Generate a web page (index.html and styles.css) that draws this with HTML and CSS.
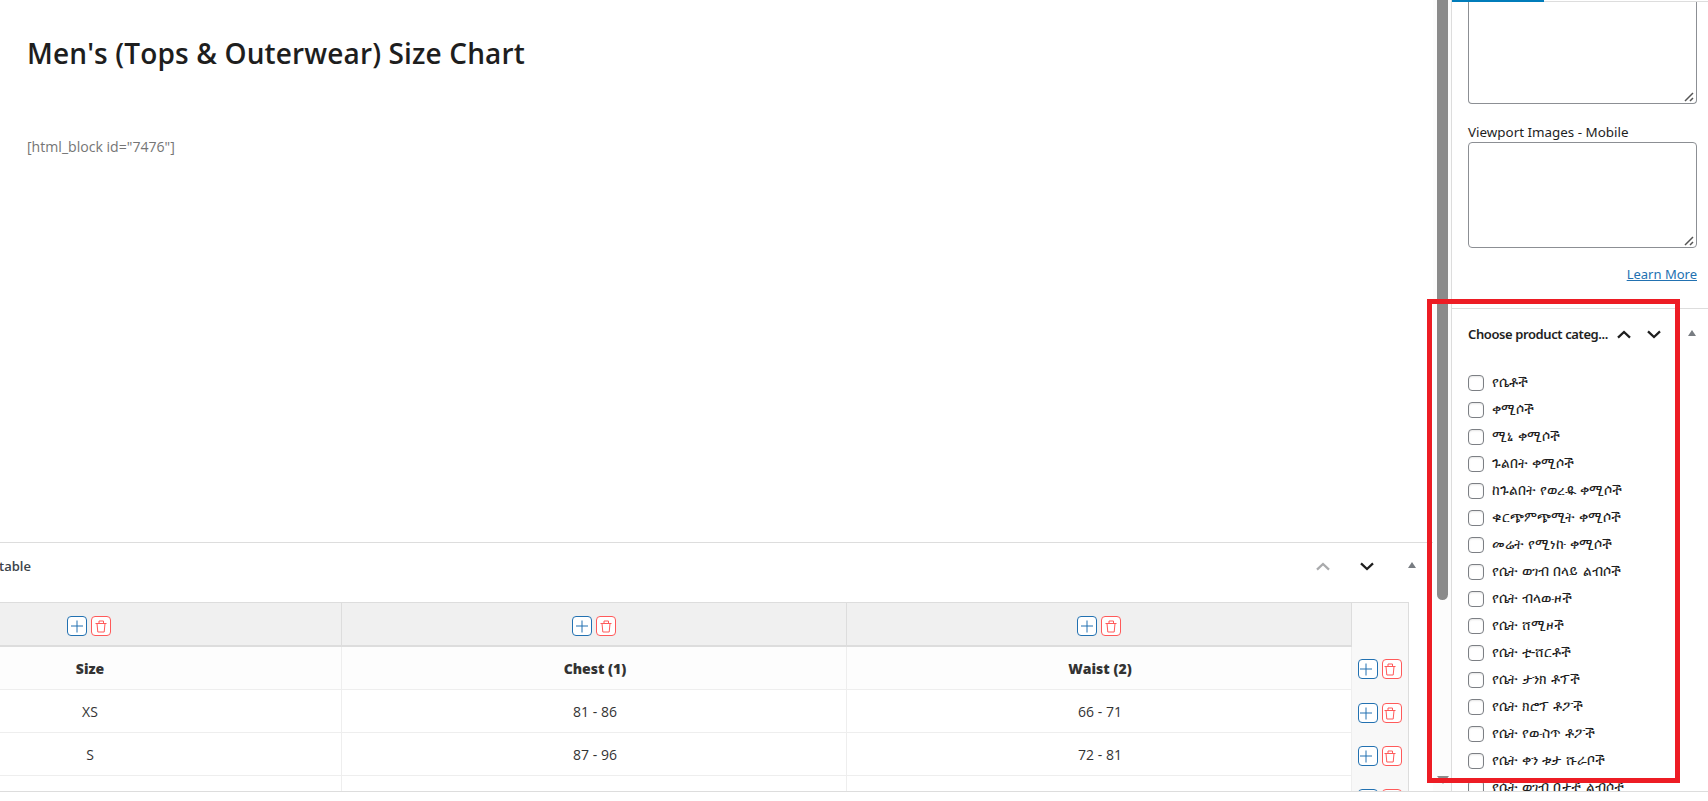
FILE: index.html
```
<!DOCTYPE html>
<html lang="en">

<head>
  <meta charset="utf-8">
  <title>Edit Size Chart</title>
  <link rel="stylesheet" href="styles.css">
</head>

<body>
  <svg class="defs">
    <symbol id="up" viewBox="0 0 14 9"><path d="M1 7.6 7 2 13 7.6" /></symbol>
    <symbol id="down" viewBox="0 0 14 9"><path d="M1 1.4 7 7 13 1.4" /></symbol>
    <symbol id="plus" viewBox="0 0 12 12"><path d="M6 0v12M0 5.5h12" /></symbol>
    <symbol id="trash" viewBox="0 0 12 13"><path d="M.5 3.5h11M4 3V1h4.500v2M2 3.500l.8 8.500h6.400l.8-8.500" /></symbol>
  </svg>

  <div class="workspace">
    <main class="editor">
      <section class="post">
        <h1>Men's (Tops &amp; Outerwear) Size Chart</h1>
        <p>[html_block id="7476"]</p>
      </section>

      <section class="metabox">
        <header>
          <h2>table</h2>
          <svg class="chevron disabled"><use href="#up" /></svg>
          <svg class="chevron"><use href="#down" /></svg>
          <i class="toggle"></i>
        </header>
        <div class="chart">
          <div class="row tools">
            <div><button class="add"><svg><use href="#plus" /></svg></button><button class="del"><svg><use href="#trash" /></svg></button></div>
            <div><button class="add"><svg><use href="#plus" /></svg></button><button class="del"><svg><use href="#trash" /></svg></button></div>
            <div><button class="add"><svg><use href="#plus" /></svg></button><button class="del"><svg><use href="#trash" /></svg></button></div>
            <div class="side"></div>
          </div>
          <div class="row names">
            <div>Size</div>
            <div>Chest (1)</div>
            <div>Waist (2)</div>
            <div class="side"><button class="add"><svg><use href="#plus" /></svg></button><button class="del"><svg><use href="#trash" /></svg></button></div>
          </div>
          <div class="row">
            <div>XS</div>
            <div>81 - 86</div>
            <div>66 - 71</div>
            <div class="side"><button class="add"><svg><use href="#plus" /></svg></button><button class="del"><svg><use href="#trash" /></svg></button></div>
          </div>
          <div class="row">
            <div>S</div>
            <div>87 - 96</div>
            <div>72 - 81</div>
            <div class="side"><button class="add"><svg><use href="#plus" /></svg></button><button class="del"><svg><use href="#trash" /></svg></button></div>
          </div>
          <div class="row">
            <div></div>
            <div></div>
            <div></div>
            <div class="side"><button class="add"><svg><use href="#plus" /></svg></button><button class="del"><svg><use href="#trash" /></svg></button></div>
          </div>
        </div>
      </section>
    </main>

    <div class="scrollbar">
      <div class="thumb"></div>
      <div class="arrow"></div>
    </div>

    <aside class="sidebar">
      <div class="tabs"><span></span></div>
      <section class="viewport">
        <div class="field first"><svg class="grip"><path d="M1 9 9 1M6 9 9 6" /></svg></div>
        <label>Viewport Images - Mobile</label>
        <div class="field"><svg class="grip"><path d="M1 9 9 1M6 9 9 6" /></svg></div>
        <a href="#">Learn More</a>
      </section>
      <section class="categories">
        <header>
          <h2>Choose product categ...</h2>
          <svg class="chevron"><use href="#up" /></svg>
          <svg class="chevron"><use href="#down" /></svg>
          <i class="toggle"></i>
        </header>
        <ul>
          <li><input type="checkbox"><span>የሴቶች</span></li>
          <li><input type="checkbox"><span>ቀሚሶች</span></li>
          <li><input type="checkbox"><span>ሚኒ ቀሚሶች</span></li>
          <li><input type="checkbox"><span>ጉልበት ቀሚሶች</span></li>
          <li><input type="checkbox"><span>ከጉልበት የወረዱ ቀሚሶች</span></li>
          <li><input type="checkbox"><span>ቁርጭምጭሚት ቀሚሶች</span></li>
          <li><input type="checkbox"><span>መሬት የሚነኩ ቀሚሶች</span></li>
          <li><input type="checkbox"><span>የሴት ወገብ በላይ ልብሶች</span></li>
          <li><input type="checkbox"><span>የሴት ብላውዞች</span></li>
          <li><input type="checkbox"><span>የሴት ሸሚዞች</span></li>
          <li><input type="checkbox"><span>የሴት ቲ-ሸርቶች</span></li>
          <li><input type="checkbox"><span>የሴት ታንክ ቶፕች</span></li>
          <li><input type="checkbox"><span>የሴት ክሮፕ ቶፖች</span></li>
          <li><input type="checkbox"><span>የሴት የውስጥ ቶፖች</span></li>
          <li><input type="checkbox"><span>የሴት ቀን ቱታ ሹራቦች</span></li>
          <li><input type="checkbox"><span>የሴት ወገብ በታች ልብሶች</span></li>
        </ul>
      </section>
    </aside>
  </div>
  <footer></footer>

  <div class="highlight"></div>
</body>

</html>
```

FILE: styles.css
```
* {
  box-sizing: border-box;
}

body {
  margin: 0;
  height: 801px;
  overflow: hidden;
  position: relative;
  background: #fff;
  color: #1e1e1e;
  font: 14px/20px "Open Sans", "Noto Sans", sans-serif;
}

h1, h2, p, ul {
  margin: 0;
  padding: 0;
}

.defs {
  display: none;
}

.workspace {
  display: flex;
  height: 791px;
  overflow: hidden;
}

footer {
  height: 10px;
  border-top: 1px solid #ddd;
}

/* editor */
.editor {
  width: 1433px;
  overflow: hidden;
}

.post {
  height: 542px;
  padding: 33px 27px 0;
}

.post h1 {
  font-size: 28px;
  font-weight: 600;
  line-height: 40px;
  letter-spacing: .14px;
}

.post p {
  margin-top: 64px;
  color: #757575;
  font-size: 14.1px;
}

.metabox {
  border-top: 1px solid #ddd;
}

header {
  display: flex;
  align-items: center;
}

header h2 {
  font-size: 13px;
  font-weight: 600;
  white-space: nowrap;
}

.metabox header {
  height: 59px;
  padding: 0 17px 13px 0;
}

.metabox h2 {
  flex: 1;
  margin-left: -1px;
  color: #3c434a;
}

.chevron {
  width: 14px;
  height: 9px;
  fill: none;
  stroke: #1e1e1e;
  stroke-width: 2.3;
}

.metabox .chevron {
  margin-right: 30px;
}

.metabox .chevron + .toggle {
  margin-left: 4px;
}

.chevron.disabled {
  stroke: #a9aaac;
}

.toggle {
  border: 4px solid transparent;
  border-top: 0;
  border-bottom: 6px solid #787c82;
}

.metabox .toggle {
  margin-bottom: 2px;
}

.chart {
  width: 1572px;
  margin-left: -163px;
  border-top: 1px solid #ddd;
  color: #333;
}

.row {
  display: grid;
  grid-template-columns: 505px 505px 505px 57px;
  height: 43px;
}

.row > div {
  display: flex;
  align-items: center;
  justify-content: center;
  gap: 4px;
  padding: 2px 0 0 2px;
  border-right: 1px solid #eee;
  border-bottom: 1px solid #eee;
}

.row.tools {
  height: 44px;
}

.tools > div {
  background: #f0f0f0;
  border-right-color: #ddd;
  border-bottom: 2px solid #ddd;
  padding: 4px 0 0;
}

.names > div {
  background: #fdfdfd;
  font-weight: 800;
}

.row > .side {
  background: #f8f8f8;
  border-right-color: #ddd;
  border-bottom: 0;
  padding: 3px 0 0;
}

.names > .side {
  padding-top: 1px;
}

button {
  display: flex;
  align-items: center;
  justify-content: center;
  width: 20px;
  height: 20px;
  padding: 0;
  background: #fff;
  border: 1px solid;
  border-radius: 4px;
}

button svg {
  width: 12px;
  height: 13px;
  fill: none;
  stroke: currentColor;
  stroke-width: 1;
}

.side button {
  justify-content: flex-start;
  padding-left: 1px;
}

.add {
  color: #2271b1;
}

.del {
  color: #ff5a5a;
}

/* scrollbar */
.scrollbar {
  display: flex;
  flex-direction: column;
  justify-content: space-between;
  align-items: center;
  width: 18px;
  padding-left: 1px;
  background: #fcfcfc;
}

.thumb {
  width: 11px;
  height: 600px;
  background: #8b8b8b;
  border-radius: 0 0 6px 6px;
}

.arrow {
  margin-bottom: 7px;
  border: 6px solid transparent;
  border-top: 8px solid #8b8b8b;
  border-bottom: 0;
}

/* sidebar */
.sidebar {
  flex: 1;
  border-left: 1px solid #ddd;
  font-family: "Noto Sans", sans-serif;
  font-size: 13px;
}

.tabs {
  height: 2px;
  border-bottom: 1px solid #ddd;
}

.tabs span {
  display: block;
  width: 92px;
  height: 2px;
  background: #007cba;
}

.viewport {
  display: flex;
  flex-direction: column;
  height: 306px;
  padding: 0 11px 0 16px;
}

.field {
  display: flex;
  align-items: flex-end;
  justify-content: flex-end;
  height: 106px;
  padding: 1px 2px;
  border: 1px solid #8c8f94;
  border-radius: 4px;
}

.first {
  height: 102px;
  border-top: 0;
  border-radius: 0 0 4px 4px;
}

.grip {
  width: 10px;
  height: 10px;
  stroke: #555;
  stroke-width: 1.5;
}

.viewport label {
  margin: 18px 0 0;
  font-size: 13.4px;
}

.viewport a {
  align-self: flex-end;
  margin-top: 16px;
  color: #2271b1;
}

.categories {
  border-top: 1px solid #ddd;
}

.categories header {
  height: 50px;
  padding: 0 12px 0 16px;
}

.categories h2 {
  width: 149px;
  letter-spacing: -.4px;
}

.categories .chevron + .chevron {
  margin-left: 16px;
}

.categories .toggle {
  margin: 0 0 2px auto;
}

ul {
  padding: 10px 0 0 16px;
  list-style: none;
}

li {
  display: flex;
  align-items: center;
  gap: 8px;
  height: 27px;
  font-size: 14.4px;
  word-spacing: 1px;
  white-space: nowrap;
}

li span {
  margin-top: -2px;
}

input {
  appearance: none;
  flex: none;
  width: 16px;
  height: 16px;
  margin: 0;
  border: 1px solid #7c7f84;
  border-radius: 4px;
  box-shadow: inset 0 1px 2px rgba(0, 0, 0, .1);
}

/* red frame over the category box */
.highlight {
  position: absolute;
  left: 1427px;
  top: 299px;
  width: 253px;
  height: 484px;
  border: 5px solid #ed1c24;
}
```
